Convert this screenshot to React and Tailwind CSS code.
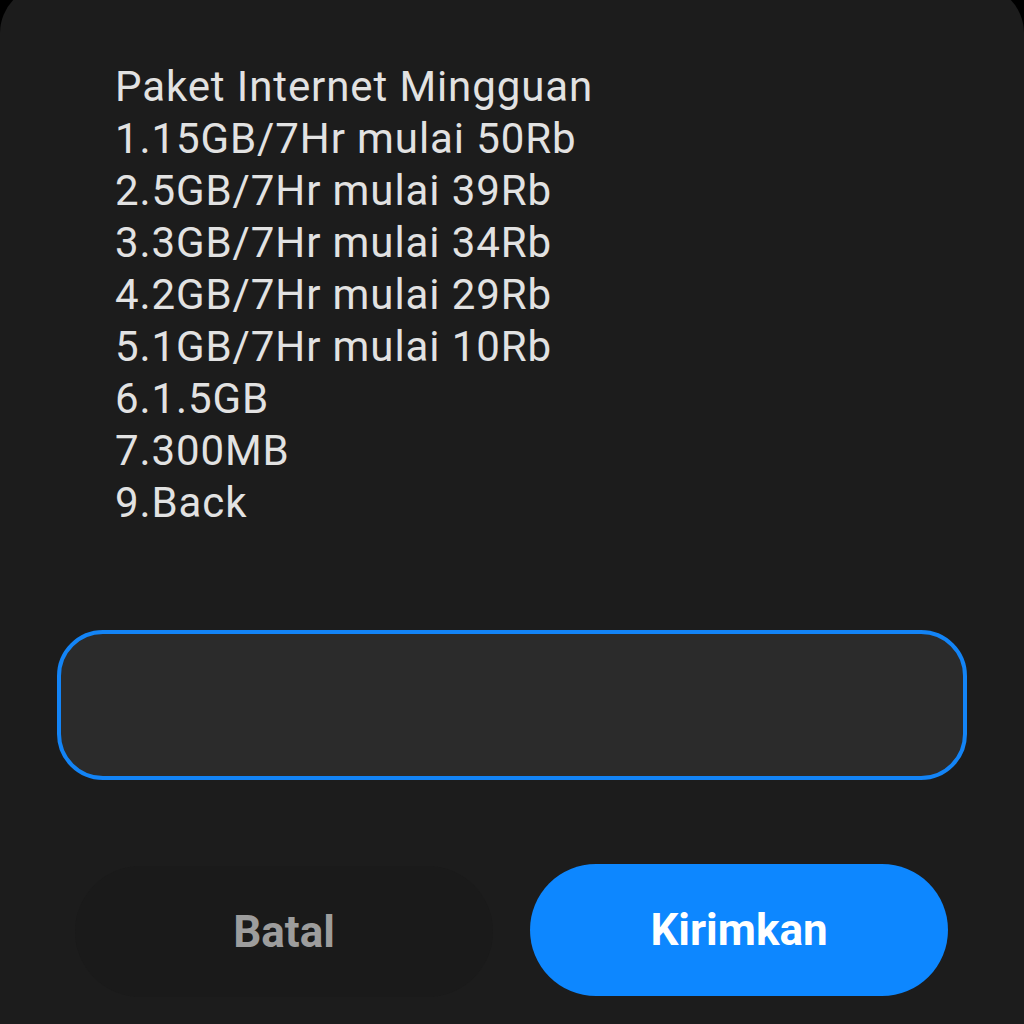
export default function App() {
  const lines = [
    'Paket Internet Mingguan',
    '1.15GB/7Hr mulai 50Rb',
    '2.5GB/7Hr mulai 39Rb',
    '3.3GB/7Hr mulai 34Rb',
    '4.2GB/7Hr mulai 29Rb',
    '5.1GB/7Hr mulai 10Rb',
    '6.1.5GB',
    '7.300MB',
    '9.Back',
  ];

  return (
    <div className="w-[1024px] h-[1024px] bg-black overflow-hidden font-['Roboto',sans-serif]">
      <div className="-mt-[15px] h-[1039px] bg-[#1c1c1c] rounded-t-[48px] pt-[76px]">
        <div className="pl-[115px] text-[42px] leading-[52px] tracking-[0.9px] text-[#e2e2e2]">
          {lines.map((l) => (
            <div key={l}>{l}</div>
          ))}
        </div>

        <div className="mt-[101px] mx-[57px] h-[150px] rounded-[46px] border-4 border-[#1384f6] bg-[#2b2b2b]" />

        <div className="mt-[86px] flex gap-[37px] pl-[75px]">
          <button className="w-[418px] h-[131px] rounded-full bg-[#1a1a1a] text-[44px] font-bold text-[#9d9d9d]">
            Batal
          </button>
          <button className="w-[418px] h-[132px] -mt-[2px] rounded-full bg-[#0d87ff] text-[44px] font-bold text-white">
            Kirimkan
          </button>
        </div>
      </div>
    </div>
  );
}
